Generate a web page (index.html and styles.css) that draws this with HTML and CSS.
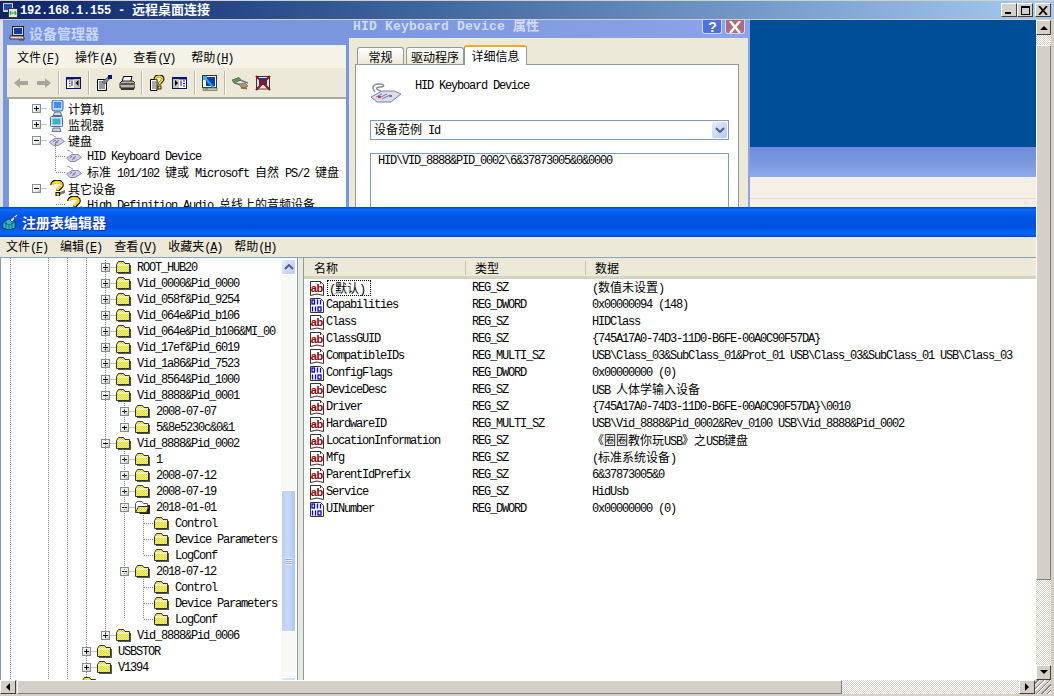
FILE: index.html
```html
<!DOCTYPE html>
<html lang="zh-CN">
<head>
<meta charset="utf-8">
<title>远程桌面连接</title>
<link rel="stylesheet" href="styles.css">
</head>
<body>
<svg class="defs" width="0" height="0" aria-hidden="true">
  <defs>
    <pattern id="dith" width="2" height="2" patternUnits="userSpaceOnUse"><rect width="2" height="2" fill="#ffff30"/><rect width="1" height="1" fill="#d0d090"/><rect x="1" y="1" width="1" height="1" fill="#d0d090"/></pattern>
    <linearGradient id="expg" x1="0" y1="0" x2="1" y2="1"><stop offset="0" stop-color="#fff"/><stop offset=".6" stop-color="#f0eee2"/><stop offset="1" stop-color="#bdb9a6"/></linearGradient>
    <symbol id="plus" viewBox="0 0 15 16"><path d="M9.5 8.5H15" stroke="#808080" stroke-dasharray="1 1"/><rect x=".5" y="4.5" width="8" height="8" fill="url(#expg)" stroke="#7f8e9c"/><path d="M2 8.5H7M4.5 6V11" stroke="#000"/></symbol>
    <symbol id="minus" viewBox="0 0 15 16"><path d="M9.5 8.5H15" stroke="#808080" stroke-dasharray="1 1"/><rect x=".5" y="4.5" width="8" height="8" fill="url(#expg)" stroke="#7f8e9c"/><path d="M2 8.5H7" stroke="#000"/></symbol>
    <symbol id="leaf" viewBox="0 0 11 16"><path d="M1 8.5H11" stroke="#808080" stroke-dasharray="1 1"/></symbol>
    <symbol id="folder" viewBox="0 0 15 16"><rect x="2" y="6" width="13" height="9" fill="#555"/><path d="M.5 13.5V5.5L2.5 2.5H7.5L9 4.5H13.5V13.5Z" fill="url(#dith)" stroke="#333"/><path d="M1.5 6H12.5" stroke="#fff"/></symbol>
    <symbol id="folderopen" viewBox="0 0 15 16"><path d="M13 6H15V15H4Z" fill="#222"/><path d="M.5 13.5V4.5L2 2.5H7L8.5 4.5H12.5V7" fill="#fff" stroke="#555"/><path d="M.5 13.5L3.5 7.5H13.5L11.5 13.5Z" fill="url(#dith)" stroke="#333"/></symbol>
    <symbol id="ab" viewBox="0 0 16 16"><path d="M1.5 1.5H11.5L14.5 4.5V15.5L8 14L1.5 15.5Z" fill="#fff" stroke="#333"/><path d="M11.5 1.5V4.5H14.5" fill="#ccc" stroke="#333"/><rect x="2" y="4" width="12" height="8.500" fill="#fff"/><text x="1.800" y="11.500" class="abtxt">ab</text></symbol>
    <symbol id="bin" viewBox="0 0 16 16"><path d="M1.5 1.5H11.5L14.5 4.5V15.500H1.500Z" fill="#fff" stroke="#333"/><g fill="none" stroke="#0000e0" stroke-width="1.300"><rect x="3" y="3" width="2.500" height="4"/><path d="M8.500 2.500V7.500M11.500 3V7.500M3.500 9.500V14.500M6.500 9.500V14.500"/><rect x="9" y="10" width="3" height="4"/></g></symbol>
    <symbol id="computer" viewBox="0 0 16 16"><rect x="3" y="0" width="11" height="11" rx="2" fill="#b9d5f4" stroke="#3a5f98"/><rect x="5" y="2" width="7" height="6" fill="#3f8ee8"/><path d="M6 12H11L13 15.5H4Z" fill="#cfdcec" stroke="#55708f"/></symbol>
    <symbol id="monitor" viewBox="0 0 16 16"><rect x="1.500" y=".5" width="12" height="10" rx="1" fill="#d6e4f4" stroke="#4a6a90"/><rect x="3.500" y="2.500" width="8" height="6" fill="#38b4c8"/><path d="M4 12H11L12 15.5H3Z" fill="#c6d2e0" stroke="#667a90"/></symbol>
    <symbol id="kbd" viewBox="0 0 16 16"><path d="M1 3C3 1 5 5 7 5" fill="none" stroke="#8a8ea8"/><path d="M.5 10L6 6.500H12L15.500 9.500L9 13.500H4Z" fill="#cfcde8" stroke="#8a8aa8"/><path d="M4 9.500L6 8.500M7 10L10 8.500M6 11.500L9 10" stroke="#7878a0"/></symbol>
    <symbol id="kbdbig" viewBox="0 0 32 22"><path d="M5 11C1 6 3 3 9 3C15 3 15 6 10 6C5 6 6 9 11 10" fill="none" stroke="#8d8d9c" stroke-width="1.500"/><path d="M1 16L12 10H24L31 13L21 21H7Z" fill="#dcdaf0" stroke="#80809c"/><path d="M6 16L12 13M9 17L17 13M12 18L20 14" stroke="#7373a8"/><rect x="8" y="15" width="3" height="2" fill="#d04040"/><rect x="19" y="14" width="3" height="2" fill="#40a050"/></symbol>
    <symbol id="quest" viewBox="0 0 16 16"><path d="M3 5C3 0 13 0 13 5C13 8 9 8 9 11" fill="none" stroke="#000" stroke-width="3.600"/><path d="M3.500 5C3.500 1 12.500 1 12.500 5C12.500 7.500 8.500 7.500 8.500 10.500" fill="none" stroke="#ffdc00" stroke-width="2.600"/><rect x="7" y="12.500" width="3.500" height="3.500" fill="#ffdc00" stroke="#000"/><path d="M11 12L16 10V13L11 15Z" fill="#777"/></symbol>
    <symbol id="t-back" viewBox="0 0 16 16"><path d="M1 8L7 3V6H15V10H7V13Z" fill="#a8a69a"/></symbol>
    <symbol id="t-fwd" viewBox="0 0 16 16"><path d="M15 8L9 3V6H1V10H9V13Z" fill="#a8a69a"/></symbol>
    <symbol id="t-col" viewBox="0 0 16 16"><rect x=".5" y="2.500" width="14" height="11" fill="#fff" stroke="#00107c"/><rect x="1" y="3" width="14" height="1.500" fill="#00107c"/><rect x="8" y="4" width="6" height="9" fill="#c8c4b4"/><path d="M6 5.500V11M3 6H4.500M3 8.500H4.500M3 11H4.500" stroke="#00107c"/><path d="M12.500 5V11L9.500 8Z" fill="#000"/></symbol>
    <symbol id="t-col2" viewBox="0 0 16 16"><rect x=".5" y="2.500" width="14" height="11" fill="#fff" stroke="#00107c"/><rect x="1" y="3" width="14" height="1.500" fill="#00107c"/><rect x="1" y="4" width="6" height="9" fill="#c8c4b4"/><path d="M9 5.500V11M11 6H13M11 8.500H13M11 11H13" stroke="#00107c"/><path d="M3 5V11L6 8Z" fill="#000"/></symbol>
    <symbol id="t-prop" viewBox="0 0 16 16"><path d="M1.500 4.500H10.500V15.500H1.500Z" fill="#fff" stroke="#000"/><path d="M3 7H9M3 9H9M3 11H9M3 13H9" stroke="#333"/><path d="M6 7L13 1L15.500 2L9 9Z" fill="#888" stroke="#333" stroke-width=".5"/><rect x="12" y="0" width="4" height="4" fill="#00108c"/></symbol>
    <symbol id="t-print" viewBox="0 0 16 16"><path d="M4.500 1.500H13L11.500 7H3Z" fill="#fff" stroke="#000"/><path d="M1 8L3 6H14L16 8V13H1Z" fill="#b8b4a8" stroke="#000" stroke-width=".8"/><rect x="2" y="8" width="13" height="2" fill="#555"/><path d="M2 13H15V15H2Z" fill="#333"/></symbol>
    <symbol id="t-help" viewBox="0 0 16 16"><path d="M1.500 4.500H8V15.500H1.500Z" fill="#fff" stroke="#000"/><path d="M3 7H7M3 9H7M3 11H7M3 13H7" stroke="#555"/><path d="M6 4.500C6 -.5 14 -.5 14 4C14 7 10.500 6.500 10.500 9.500" fill="none" stroke="#000" stroke-width="3"/><path d="M6.500 4.500C6.500 .5 13.500 .5 13.500 4C13.500 6.500 10.500 6.500 10.500 9" fill="none" stroke="#ffe000" stroke-width="1.800"/><rect x="9" y="11" width="3" height="3" fill="#ffe000" stroke="#000" stroke-width=".8"/></symbol>
    <symbol id="t-wand" viewBox="0 0 16 16"><rect x=".5" y=".5" width="14" height="12" fill="#fff" stroke="#333"/><rect x="4" y="2" width="9" height="9" fill="#0a3ab0"/><path d="M3 3L12 13" stroke="#20a0e0" stroke-width="2.500"/><rect x="1" y="1" width="4" height="4" fill="#40b0e0"/><path d="M1 13H15V15.500H1Z" fill="#c8c4b4" stroke="#555" stroke-width=".6"/><rect x="3" y="13.500" width="3" height="1" fill="#20a040"/></symbol>
    <symbol id="t-plug" viewBox="0 0 16 16"><path d="M0 5L7 2.500L9 5L2 8Z" fill="#5f9a52" stroke="#2f5a2c" stroke-width=".7"/><path d="M8 5L16 8M2 8C6 9 9 9 14 12" stroke="#777" fill="none" stroke-width="1.600"/><path d="M7 9L13 8L16 11L10 13.500Z" fill="#a09c92" stroke="#555" stroke-width=".6"/><path d="M9 12.500L15 13.500" stroke="#a06830" stroke-width="1.800"/></symbol>
    <symbol id="t-x" viewBox="0 0 16 16"><rect x="1.500" y="1.500" width="13" height="12" fill="#e8e6dc" stroke="#333"/><rect x="4" y="3" width="8" height="7" fill="#0a3ab0"/><rect x="2" y="13" width="12" height="2" fill="#999"/><path d="M1 1L15 15M15 1L1 15" stroke="#9a1010" stroke-width="2"/></symbol>
    <symbol id="i-rdp" viewBox="0 0 16 16"><rect x=".5" y=".5" width="11" height="10" fill="#c6d3e6" stroke="#223"/><rect x="2" y="2" width="8" height="6" fill="#1c50b8"/><rect x="6.500" y="6.500" width="9" height="9" fill="#dfe8d4" stroke="#334"/><path d="M8 11H14M9 9L8 11L9 13M13 9L14 11L13 13" stroke="#1f9a30" fill="none"/></symbol>
    <symbol id="i-dm" viewBox="0 0 16 16"><rect x="3.500" y="1.500" width="11" height="9" fill="#d8d4c8" stroke="#222"/><rect x="5" y="3" width="8" height="6" fill="#1038a0"/><path d="M1 11H14L15.500 14H1Z" fill="#d8d4c8" stroke="#222" stroke-width=".8"/><path d="M10 15H15" stroke="#444"/></symbol>
    <symbol id="i-reg" viewBox="0 0 16 16"><path d="M1 8L7 5L13 8V14L7 16L1 14Z" fill="#30b8c8" stroke="#063a50" stroke-width=".8"/><path d="M1 8L7 11L13 8M7 11V16M4 6.500V15M10 6.500V15" stroke="#063a50" stroke-width=".6" fill="none"/><path d="M8 6L15 0L16 1L10 8Z" fill="#e8e8e8" stroke="#223" stroke-width=".6"/><rect x="12" y="3" width="3" height="3" fill="#3050d0"/></symbol>
    <symbol id="w-up" viewBox="0 0 10 6"><path d="M1 5L5 1L9 5" fill="none" stroke="#4d6185" stroke-width="2"/></symbol>
    <symbol id="w-down" viewBox="0 0 10 6"><path d="M1 1L5 5L9 1" fill="none" stroke="#4d6185" stroke-width="2"/></symbol>
  </defs>
</svg>

<div class="rdp">
  <header class="rdp-title">
    <svg class="ic16 rdp-ic"><use href="#i-rdp"/></svg>
    <span class="rdp-name">192.168.1.155 - <span class="rdp-z">远程桌面连接</span></span>
    <div class="capbtns">
      <span class="capbtn"><i class="g-min"></i></span>
      <span class="capbtn"><i class="g-max"></i></span>
      <span class="capbtn capbtn-x">
        <svg width="10" height="9" viewBox="0 0 10 9"><path d="M1 0L9 9M9 0L1 9" stroke="#000" stroke-width="1.800"/></svg>
      </span>
    </div>
  </header>

  <div class="rdp-main">
    <div class="desktop">
      <div class="top-row">

        <section class="dm">
          <div class="dm-title"><svg class="ic16"><use href="#i-dm"/></svg><span class="dm-name z">设备管理器</span></div>
          <nav class="dm-menu">
            <span><span class="z">文件</span>(<u>F</u>)</span>
            <span><span class="z">操作</span>(<u>A</u>)</span>
            <span><span class="z">查看</span>(<u>V</u>)</span>
            <span><span class="z">帮助</span>(<u>H</u>)</span>
          </nav>
          <div class="dm-tools">
            <svg class="ic16"><use href="#t-back"/></svg>
            <svg class="ic16"><use href="#t-fwd"/></svg>
            <i class="sep"></i>
            <svg class="ic16"><use href="#t-col"/></svg>
            <i class="sep"></i>
            <svg class="ic16"><use href="#t-prop"/></svg>
            <svg class="ic16"><use href="#t-print"/></svg>
            <i class="sep"></i>
            <svg class="ic16"><use href="#t-help"/></svg>
            <svg class="ic16"><use href="#t-col2"/></svg>
            <i class="sep"></i>
            <svg class="ic16"><use href="#t-wand"/></svg>
            <i class="sep"></i>
            <svg class="ic16"><use href="#t-plug"/></svg>
            <svg class="ic16"><use href="#t-x"/></svg>
          </div>
          <div class="dm-tree">
            <div class="row d0"><svg class="exp"><use href="#plus"/></svg><svg class="ic16 dic"><use href="#computer"/></svg><span class="z">计算机</span></div>
            <div class="row d0"><svg class="exp"><use href="#plus"/></svg><svg class="ic16 dic"><use href="#monitor"/></svg><span class="z">监视器</span></div>
            <div class="row d0"><svg class="exp"><use href="#minus"/></svg><svg class="ic16 dic"><use href="#kbd"/></svg><span class="z">键盘</span></div>
            <div class="branch bd">
              <div class="row d1"><svg class="lf"><use href="#leaf"/></svg><svg class="ic16 dic1"><use href="#kbd"/></svg><span>HID Keyboard Device</span></div>
              <div class="row d1"><svg class="lf"><use href="#leaf"/></svg><svg class="ic16 dic1"><use href="#kbd"/></svg><span><span class="z">标准</span> 101/102 <span class="z">键或</span> Microsoft <span class="z">自然</span> PS/2 <span class="z">键盘</span></span></div>
            </div>
            <div class="row d0"><svg class="exp"><use href="#minus"/></svg><svg class="ic16 dic"><use href="#quest"/></svg><span class="z">其它设备</span></div>
            <div class="row d1"><svg class="lf"><use href="#leaf"/></svg><svg class="ic16 dic1"><use href="#quest"/></svg><span>High Definition Audio <span class="z">总线上的音频设备</span></span></div>
          </div>
        </section>

        <section class="props">
          <div class="props-title">
            <span class="props-name">HID Keyboard Device <span class="props-z">属性</span></span>
            <span class="pbtn pbtn-help">?</span>
            <span class="pbtn pbtn-close">
              <svg width="14" height="12" viewBox="0 0 14 12"><path d="M2 0L12 12M12 0L2 12" stroke="#fff" stroke-width="2.400"/></svg>
            </span>
          </div>
          <div class="props-body">
            <div class="tabs">
              <span class="tab tab-a z">常规</span>
              <span class="tab tab-b z">驱动程序</span>
              <span class="tab tab-on z">详细信息</span>
            </div>
            <div class="panel">
              <div class="dev-head"><svg class="bigkbd"><use href="#kbdbig"/></svg><span class="dev-name">HID Keyboard Device</span></div>
              <div class="select"><span><span class="z">设备范例</span> Id</span><span class="sel-btn"><svg width="10" height="6"><use href="#w-down"/></svg></span></div>
              <div class="textbox">HID\VID_8888&amp;PID_0002\6&amp;37873005&amp;0&amp;0000</div>
            </div>
          </div>
        </section>

        <section class="rest">
          <div class="rest-blue"></div>
          <div class="rest-band"></div>
          <div class="rest-pale"></div>
          <div class="rest-pale2"></div>
        </section>
      </div>

      <section class="reg">
        <div class="reg-title"><svg class="ic16"><use href="#i-reg"/></svg><span class="reg-name z">注册表编辑器</span></div>
        <nav class="reg-menu">
          <span><span class="z">文件</span>(<u>F</u>)</span>
          <span><span class="z">编辑</span>(<u>E</u>)</span>
          <span><span class="z">查看</span>(<u>V</u>)</span>
          <span><span class="z">收藏夹</span>(<u>A</u>)</span>
          <span><span class="z">帮助</span>(<u>H</u>)</span>
        </nav>
        <div class="reg-split">
          <div class="tree-pane">
            <div class="tree">
              <div class="branch b105">
                <div class="row l0"><svg class="exp"><use href="#plus"/></svg><svg class="fld"><use href="#folder"/></svg><span>ROOT_HUB20</span></div>
                <div class="row l0"><svg class="exp"><use href="#plus"/></svg><svg class="fld"><use href="#folder"/></svg><span>Vid_0000&amp;Pid_0000</span></div>
                <div class="row l0"><svg class="exp"><use href="#plus"/></svg><svg class="fld"><use href="#folder"/></svg><span>Vid_058f&amp;Pid_9254</span></div>
                <div class="row l0"><svg class="exp"><use href="#plus"/></svg><svg class="fld"><use href="#folder"/></svg><span>Vid_064e&amp;Pid_b106</span></div>
                <div class="row l0"><svg class="exp"><use href="#plus"/></svg><svg class="fld"><use href="#folder"/></svg><span>Vid_064e&amp;Pid_b106&amp;MI_00</span></div>
                <div class="row l0"><svg class="exp"><use href="#plus"/></svg><svg class="fld"><use href="#folder"/></svg><span>Vid_17ef&amp;Pid_6019</span></div>
                <div class="row l0"><svg class="exp"><use href="#plus"/></svg><svg class="fld"><use href="#folder"/></svg><span>Vid_1a86&amp;Pid_7523</span></div>
                <div class="row l0"><svg class="exp"><use href="#plus"/></svg><svg class="fld"><use href="#folder"/></svg><span>Vid_8564&amp;Pid_1000</span></div>
                <div class="row l0"><svg class="exp"><use href="#minus"/></svg><svg class="fld"><use href="#folder"/></svg><span>Vid_8888&amp;Pid_0001</span></div>
                <div class="branch b124">
                  <div class="row l1"><svg class="exp"><use href="#plus"/></svg><svg class="fld"><use href="#folder"/></svg><span>2008-07-07</span></div>
                  <div class="row l1"><svg class="exp"><use href="#plus"/></svg><svg class="fld"><use href="#folder"/></svg><span>5&amp;8e5230c&amp;0&amp;1</span></div>
                </div>
                <div class="row l0"><svg class="exp"><use href="#minus"/></svg><svg class="fld"><use href="#folder"/></svg><span>Vid_8888&amp;Pid_0002</span></div>
                <div class="branch b124">
                  <div class="row l1"><svg class="exp"><use href="#plus"/></svg><svg class="fld"><use href="#folder"/></svg><span>1</span></div>
                  <div class="row l1"><svg class="exp"><use href="#plus"/></svg><svg class="fld"><use href="#folder"/></svg><span>2008-07-12</span></div>
                  <div class="row l1"><svg class="exp"><use href="#plus"/></svg><svg class="fld"><use href="#folder"/></svg><span>2008-07-19</span></div>
                  <div class="row l1"><svg class="exp"><use href="#minus"/></svg><svg class="fld"><use href="#folderopen"/></svg><span>2018-01-01</span></div>
                  <div class="branch b143">
                    <div class="row l2"><svg class="lf"><use href="#leaf"/></svg><svg class="fld"><use href="#folder"/></svg><span>Control</span></div>
                    <div class="row l2"><svg class="lf"><use href="#leaf"/></svg><svg class="fld"><use href="#folder"/></svg><span>Device Parameters</span></div>
                    <div class="row l2"><svg class="lf"><use href="#leaf"/></svg><svg class="fld"><use href="#folder"/></svg><span>LogConf</span></div>
                  </div>
                  <div class="row l1"><svg class="exp"><use href="#minus"/></svg><svg class="fld"><use href="#folder"/></svg><span>2018-07-12</span></div>
                  <div class="branch b143">
                    <div class="row l2"><svg class="lf"><use href="#leaf"/></svg><svg class="fld"><use href="#folder"/></svg><span>Control</span></div>
                    <div class="row l2"><svg class="lf"><use href="#leaf"/></svg><svg class="fld"><use href="#folder"/></svg><span>Device Parameters</span></div>
                    <div class="row l2"><svg class="lf"><use href="#leaf"/></svg><svg class="fld"><use href="#folder"/></svg><span>LogConf</span></div>
                  </div>
                </div>
                <div class="row l0"><svg class="exp"><use href="#plus"/></svg><svg class="fld"><use href="#folder"/></svg><span>Vid_8888&amp;Pid_0006</span></div>
              </div>
              <div class="row lm1"><svg class="exp"><use href="#plus"/></svg><svg class="fld"><use href="#folder"/></svg><span>USBSTOR</span></div>
              <div class="row lm1"><svg class="exp"><use href="#plus"/></svg><svg class="fld"><use href="#folder"/></svg><span>V1394</span></div>
              <div class="row lm2"><svg class="fld"><use href="#folder"/></svg></div>
            </div>
            <div class="tscroll">
              <span class="xp-btn"><svg width="10" height="6"><use href="#w-up"/></svg></span>
              <span class="xp-thumb"><i class="grip"></i></span>
              <span class="xp-btn xp-btn-low"></span>
            </div>
          </div>
          <div class="list-pane">
            <div class="thead">
              <span class="th th1 z">名称</span>
              <span class="th th2 z">类型</span>
              <span class="th th3 z">数据</span>
            </div>
            <div class="li"><span class="c1"><svg class="ic16"><use href="#ab"/></svg><span class="sel">(<span class="z">默认</span>)</span></span><span>REG_SZ</span><span>(<span class="z">数值未设置</span>)</span></div>
            <div class="li"><span class="c1"><svg class="ic16"><use href="#bin"/></svg><span>Capabilities</span></span><span>REG_DWORD</span><span>0x00000094 (148)</span></div>
            <div class="li"><span class="c1"><svg class="ic16"><use href="#ab"/></svg><span>Class</span></span><span>REG_SZ</span><span>HIDClass</span></div>
            <div class="li"><span class="c1"><svg class="ic16"><use href="#ab"/></svg><span>ClassGUID</span></span><span>REG_SZ</span><span>{745A17A0-74D3-11D0-B6FE-00A0C90F57DA}</span></div>
            <div class="li"><span class="c1"><svg class="ic16"><use href="#ab"/></svg><span>CompatibleIDs</span></span><span>REG_MULTI_SZ</span><span>USB\Class_03&amp;SubClass_01&amp;Prot_01 USB\Class_03&amp;SubClass_01 USB\Class_03</span></div>
            <div class="li"><span class="c1"><svg class="ic16"><use href="#bin"/></svg><span>ConfigFlags</span></span><span>REG_DWORD</span><span>0x00000000 (0)</span></div>
            <div class="li"><span class="c1"><svg class="ic16"><use href="#ab"/></svg><span>DeviceDesc</span></span><span>REG_SZ</span><span>USB <span class="z">人体学输入设备</span></span></div>
            <div class="li"><span class="c1"><svg class="ic16"><use href="#ab"/></svg><span>Driver</span></span><span>REG_SZ</span><span>{745A17A0-74D3-11D0-B6FE-00A0C90F57DA}\0010</span></div>
            <div class="li"><span class="c1"><svg class="ic16"><use href="#ab"/></svg><span>HardwareID</span></span><span>REG_MULTI_SZ</span><span>USB\Vid_8888&amp;Pid_0002&amp;Rev_0100 USB\Vid_8888&amp;Pid_0002</span></div>
            <div class="li"><span class="c1"><svg class="ic16"><use href="#ab"/></svg><span>LocationInformation</span></span><span>REG_SZ</span><span><span class="z">《圈圈教你玩</span>USB<span class="z">》之</span>USB<span class="z">键盘</span></span></div>
            <div class="li"><span class="c1"><svg class="ic16"><use href="#ab"/></svg><span>Mfg</span></span><span>REG_SZ</span><span>(<span class="z">标准系统设备</span>)</span></div>
            <div class="li"><span class="c1"><svg class="ic16"><use href="#ab"/></svg><span>ParentIdPrefix</span></span><span>REG_SZ</span><span>6&amp;37873005&amp;0</span></div>
            <div class="li"><span class="c1"><svg class="ic16"><use href="#ab"/></svg><span>Service</span></span><span>REG_SZ</span><span>HidUsb</span></div>
            <div class="li"><span class="c1"><svg class="ic16"><use href="#bin"/></svg><span>UINumber</span></span><span>REG_DWORD</span><span>0x00000000 (0)</span></div>
          </div>
        </div>
      </section>
    </div>

    <aside class="vscroll">
      <span class="cbtn"><i class="tri tri-up"></i></span>
      <span class="v-dither1"></span>
      <span class="v-thumb"></span>
      <span class="v-dither2"></span>
      <span class="cbtn"><i class="tri tri-down"></i></span>
    </aside>
  </div>

  <footer class="hbar">
    <span class="cbtn cbtn-h"><i class="tri tri-left"></i></span>
    <span class="h-thumb"></span>
    <span class="h-dither"></span>
    <span class="cbtn cbtn-h"><i class="tri tri-right"></i></span>
    <span class="grip-corner"></span>
  </footer>
</div>
</body>
</html>
```
FILE: styles.css
```css
* { box-sizing: border-box; }
html, body { margin: 0; height: 100%; }
body {
  width: 1054px;
  height: 696px;
  overflow: hidden;
  background: #d4d0c8;
  color: #000;
  font: 12px/16px "Liberation Mono", "Noto Sans CJK SC", monospace;
  letter-spacing: -1.2px;
}
.defs { position: absolute; }
.abtxt { font: bold 11px "Liberation Sans", sans-serif; letter-spacing: -.4px; fill: #8b0000; }
.z { font-family: "Noto Sans CJK SC", sans-serif; letter-spacing: 0; }
u { text-decoration: underline; }
.ic16 { width: 16px; height: 16px; flex: none; display: block; }

.rdp { display: flex; flex-direction: column; width: 1054px; height: 696px; }
.rdp-title {
  height: 20px;
  flex: none;
  display: flex;
  align-items: center;
  padding: 1px 3px 1px 2px;
  border-top: 1px solid #d4d0c8;
  border-bottom: 1px solid #d4d0c8;
  background: linear-gradient(90deg, #0a246a, #3f659e 40%, #a6caf0);
  color: #fff;
}
.rdp-ic { margin-right: 2px; }
.rdp-name { font-weight: bold; letter-spacing: -.2px; white-space: pre; }
.rdp-z { font: bold 13px/16px "Noto Sans CJK SC", sans-serif; letter-spacing: 0; }
.capbtns { margin-left: auto; display: flex; }
.capbtn {
  width: 16px; height: 14px; margin-left: 0;
  display: flex; align-items: center; justify-content: center;
  background: #d4d0c8;
  border: 1px solid; border-color: #fff #404040 #404040 #fff;
}
.capbtn-x { margin-left: 2px; }
.g-min { width: 6px; height: 2px; background: #000; margin: 6px 3px 0 0; }
.g-max { width: 9px; height: 9px; border: 1px solid #000; border-top-width: 2px; }

.rdp-main { display: flex; flex: 1; min-height: 0; }
.desktop { width: 1036px; display: flex; flex-direction: column; overflow: hidden; background: #fff; }
.top-row { display: flex; height: 187px; flex: none; }

.dm {
  width: 347px; flex: none; overflow: hidden;
  background: #7a96df;
  border-left: 3px solid #e3e3e0;
  padding: 0 1px 0 4px;
}
.dm-title { height: 25px; display: flex; align-items: center; padding: 0 0 0 2px; margin-left: 0; }
.dm-name { margin-left: 4px; font-size: 14px; font-weight: bold; color: #c9d6f8; }
.dm-menu { height: 23px; display: flex; gap: 16px; align-items: center; padding: 2px 0 0 10px; background: #f5f3e8; }
.dm-tools {
  height: 31px; display: flex; align-items: center; gap: 7px; padding-left: 6px;
  background: #ece9d8; border-bottom: 2px solid #aca899;
}
.sep { width: 1px; height: 24px; background: #bdb9a8; margin-left: -1px; box-shadow: 1px 0 #fff; }
.dm-tree { background: #fff; border-left: 1px solid #7f9db9; padding-top: 1px; height: 120px; overflow: hidden; margin-left: 1px; position: relative; }
.row { height: 16px; display: flex; align-items: center; white-space: pre; flex: none; }
.row > span { padding-top: 2px; }
.exp { width: 15px; height: 16px; flex: none; }
.lf { width: 11px; height: 16px; flex: none; }
.fld { width: 15px; height: 16px; flex: none; margin-right: 6px; }
.d0 { padding-left: 23px; }
.d1 { padding-left: 46px; }
.dic { margin: 0 3px 0 2px; }
.dic1 { margin-right: 5px; }

.branch { position: relative; }
.branch::before {
  content: ""; position: absolute; top: 0; bottom: 8px; width: 1px;
  background: repeating-linear-gradient(#808080 0 1px, transparent 1px 2px);
}
.bd::before { left: 46px; top: -8px; }
.b105::before { left: 104px; top: 1px; }
.b124::before { left: 123px; }
.b143::before { left: 142px; }
.l0 { padding-left: 100px; }
.l1 { padding-left: 119px; }
.l2 { padding-left: 142px; }
.lm1 { padding-left: 81px; }
.lm2 { padding-left: 81px; }

.props {
  width: 403px; flex: none; overflow: hidden;
  background: linear-gradient(90deg, #7a96df, #8ca4e8);
  padding: 0 2px;
}
.props-title { height: 18px; display: flex; align-items: flex-start; padding-left: 4px; color: #d0dbf8; }
.props-name { font-size: 13px; line-height: 10px; font-weight: bold; letter-spacing: .2px; width: 349px; white-space: pre; }
.props-z { font: bold 13px/10px "Noto Sans CJK SC", sans-serif; letter-spacing: 0; }
.pbtn {
  width: 20px; height: 14px; margin-right: 3px; flex: none;
  display: flex; align-items: center; justify-content: center;
  border: 1px solid #cfd8f2; border-top: 0; border-radius: 0 0 3px 3px;
  color: #fff; font: bold 14px/14px "Liberation Sans", sans-serif;
}
.pbtn-help { background: #4e6fe0; }
.pbtn-close { background: #b06a78; }
.props-body { background: #ece9d8; padding: 6px 9px 0 6px; height: 169px; }
.tabs { display: flex; height: 20px; padding-left: 2px; align-items: flex-end; }
.tab {
  height: 17px; text-align: center; line-height: 17px; font-size: 12px;
  border: 1px solid #919b9c; border-bottom: 0; border-radius: 3px 3px 0 0;
  background: linear-gradient(#fff, #ece9d8);
}
.tab-a { width: 47px; margin-right: 2px; }
.tab-b { width: 58px; }
.tab-on {
  width: 63px; height: 20px; line-height: 18px;
  background: #fff; border-top: 2px solid #f5a623; position: relative; z-index: 1; margin-bottom: -1px;
}
.panel { background: #fff; border: 1px solid #919b9c; padding: 16px 9px 0 14px; height: 200px; }
.dev-head { display: flex; height: 22px; margin-bottom: 17px; }
.bigkbd { width: 32px; height: 22px; flex: none; margin-right: 13px; }
.dev-name { line-height: 10px; }
.select {
  height: 20px; display: flex; align-items: center; justify-content: space-between;
  border: 1px solid #7f9db9; padding: 0 1px 0 3px; margin-bottom: 13px;
}
.sel-btn {
  width: 15px; height: 16px; display: flex; align-items: center; justify-content: center;
  background: linear-gradient(135deg, #e4ecfc, #b6c9f4); border-radius: 2px;
}
.textbox { height: 100px; border: 1px solid #7f9db9; padding: 0 7px; line-height: 14px; }

.rest { flex: 1; display: flex; flex-direction: column; }
.rest-blue { height: 127px; background: #004e98; }
.rest-band { height: 30px; background: linear-gradient(#6f8ddb 0, #7a96df 50%, #8eacec); }
.rest-pale { height: 22px; background: #f5efe5; border-bottom: 1px solid #e3decf; }
.rest-pale2 { flex: 1; background: #f5efe5; }

.reg { flex: 1; min-height: 0; display: flex; flex-direction: column; background: #ece9d8; overflow: hidden; }
.reg-title {
  height: 30px; flex: none; display: flex; align-items: center; padding-left: 2px;
  background: linear-gradient(#0042c8 0, #0a6af8 8%, #0056e8 30%, #0050dc 65%, #0068ff 90%, #0040c8 100%);
}
.reg-name { margin-left: 4px; font-size: 14px; font-weight: bold; color: #fff; text-shadow: 1px 1px #0a2f9a; }
.reg-menu { height: 21px; flex: none; display: flex; gap: 12px; align-items: center; padding-left: 6px; border-bottom: 1px solid #8aa3bc; }
.reg-split { flex: 1; min-height: 0; display: flex; gap: 5px; }
.tree-pane { width: 298px; flex: none; display: flex; background: #fff; border-left: 1px solid #7f9db9; border-right: 1px solid #7f9db9; overflow: hidden; }
.tree {
  flex: 1; min-width: 0; padding-top: 1px; overflow: hidden;
  background-image:
    repeating-linear-gradient(#808080 0 1px, transparent 1px 2px),
    repeating-linear-gradient(#808080 0 1px, transparent 1px 2px),
    repeating-linear-gradient(#808080 0 1px, transparent 1px 2px),
    repeating-linear-gradient(#808080 0 1px, transparent 1px 2px);
  background-repeat: no-repeat;
  background-size: 1px 100%;
  background-position: 9px 0, 47px 0, 66px 0, 85px 0;
}
.tscroll { width: 15px; flex: none; margin-right: 1px; display: flex; flex-direction: column; background: #f8f8f4; }
.xp-btn {
  height: 16px; flex: none; margin-top: 1px;
  display: flex; align-items: center; justify-content: center;
  background: linear-gradient(135deg, #e2ebfd, #b8cbf6);
  border: 1px solid #fff; border-radius: 2px;
}
.xp-btn-low { margin-top: 45px; }
.xp-thumb {
  height: 142px; flex: none; margin-top: 215px;
  display: flex; align-items: center; justify-content: center;
  background: linear-gradient(90deg, #bed0f8, #c7d7fb 50%, #b2c7f4);
  border: 1px solid #fff; border-radius: 2px;
}
.grip { width: 7px; height: 7px; background: repeating-linear-gradient(#eef3fe 0 1px, #8da8e4 1px 2px); }

.list-pane { flex: 1; min-width: 0; background: #fff; border-left: 1px solid #7f9db9; overflow: hidden; }
.thead { height: 21px; display: flex; background: #ece9d8; border-bottom: 3px solid #d6d2c2; }
.th {
  line-height: 20px;
  background: linear-gradient(#c7c5b2, #c7c5b2) right 3px / 1px 14px no-repeat;
}
.th1 { width: 162px; padding-left: 10px; }
.th2 { width: 120px; padding-left: 9px; }
.th3 { flex: 1; padding-left: 9px; background: none; }
.li { height: 17px; display: grid; grid-template-columns: 168px 120px 1fr; align-items: center; white-space: pre; }
.c1 { display: flex; align-items: center; padding-left: 5px; gap: 1px; }
.sel { outline: 1px dotted #000; outline-offset: -1px; padding: 0 6px 0 2px; margin-left: 1px; height: 16px; }

.vscroll { width: 15px; flex: none; display: flex; flex-direction: column; }
.cbtn {
  width: 15px; height: 15px; flex: none;
  display: flex; align-items: center; justify-content: center;
  background: #d4d0c8;
  border: 1px solid; border-color: #fff #404040 #404040 #fff;
}
.tri { width: 0; height: 0; border: 4px solid transparent; }
.tri-up { border-bottom-color: #000; margin-top: -3px; }
.tri-down { border-top-color: #000; margin-top: 3px; }
.tri-left { border-right-color: #000; margin-left: -4px; }
.tri-right { border-left-color: #000; margin-left: 4px; }
.v-dither1, .v-dither2, .h-dither { background: repeating-conic-gradient(#d4d0c8 0 25%, #fff 0 50%) 0 0 / 2px 2px; }
.v-dither1 { height: 10px; flex: none; }
.v-thumb { height: 535px; flex: none; background: #d4d0c8; border: 1px solid; border-color: #fff #808080 #808080 #fff; }
.v-dither2 { flex: 1; }

.hbar { display: flex; height: 16px; flex: none; padding-bottom: 2px; padding-right: 3px; }
.cbtn-h { width: 16px; height: 14px; }
.h-thumb { width: 825px; flex: none; margin-left: 1px; background: #d4d0c8; border: 1px solid; border-color: #fff #808080 #808080 #fff; }
.h-dither { flex: 1; }
.grip-corner { width: 16px; flex: none; background: repeating-linear-gradient(135deg, #d4d0c8 0 2px, #808080 2px 3px, #fff 3px 4px) ; }
```
